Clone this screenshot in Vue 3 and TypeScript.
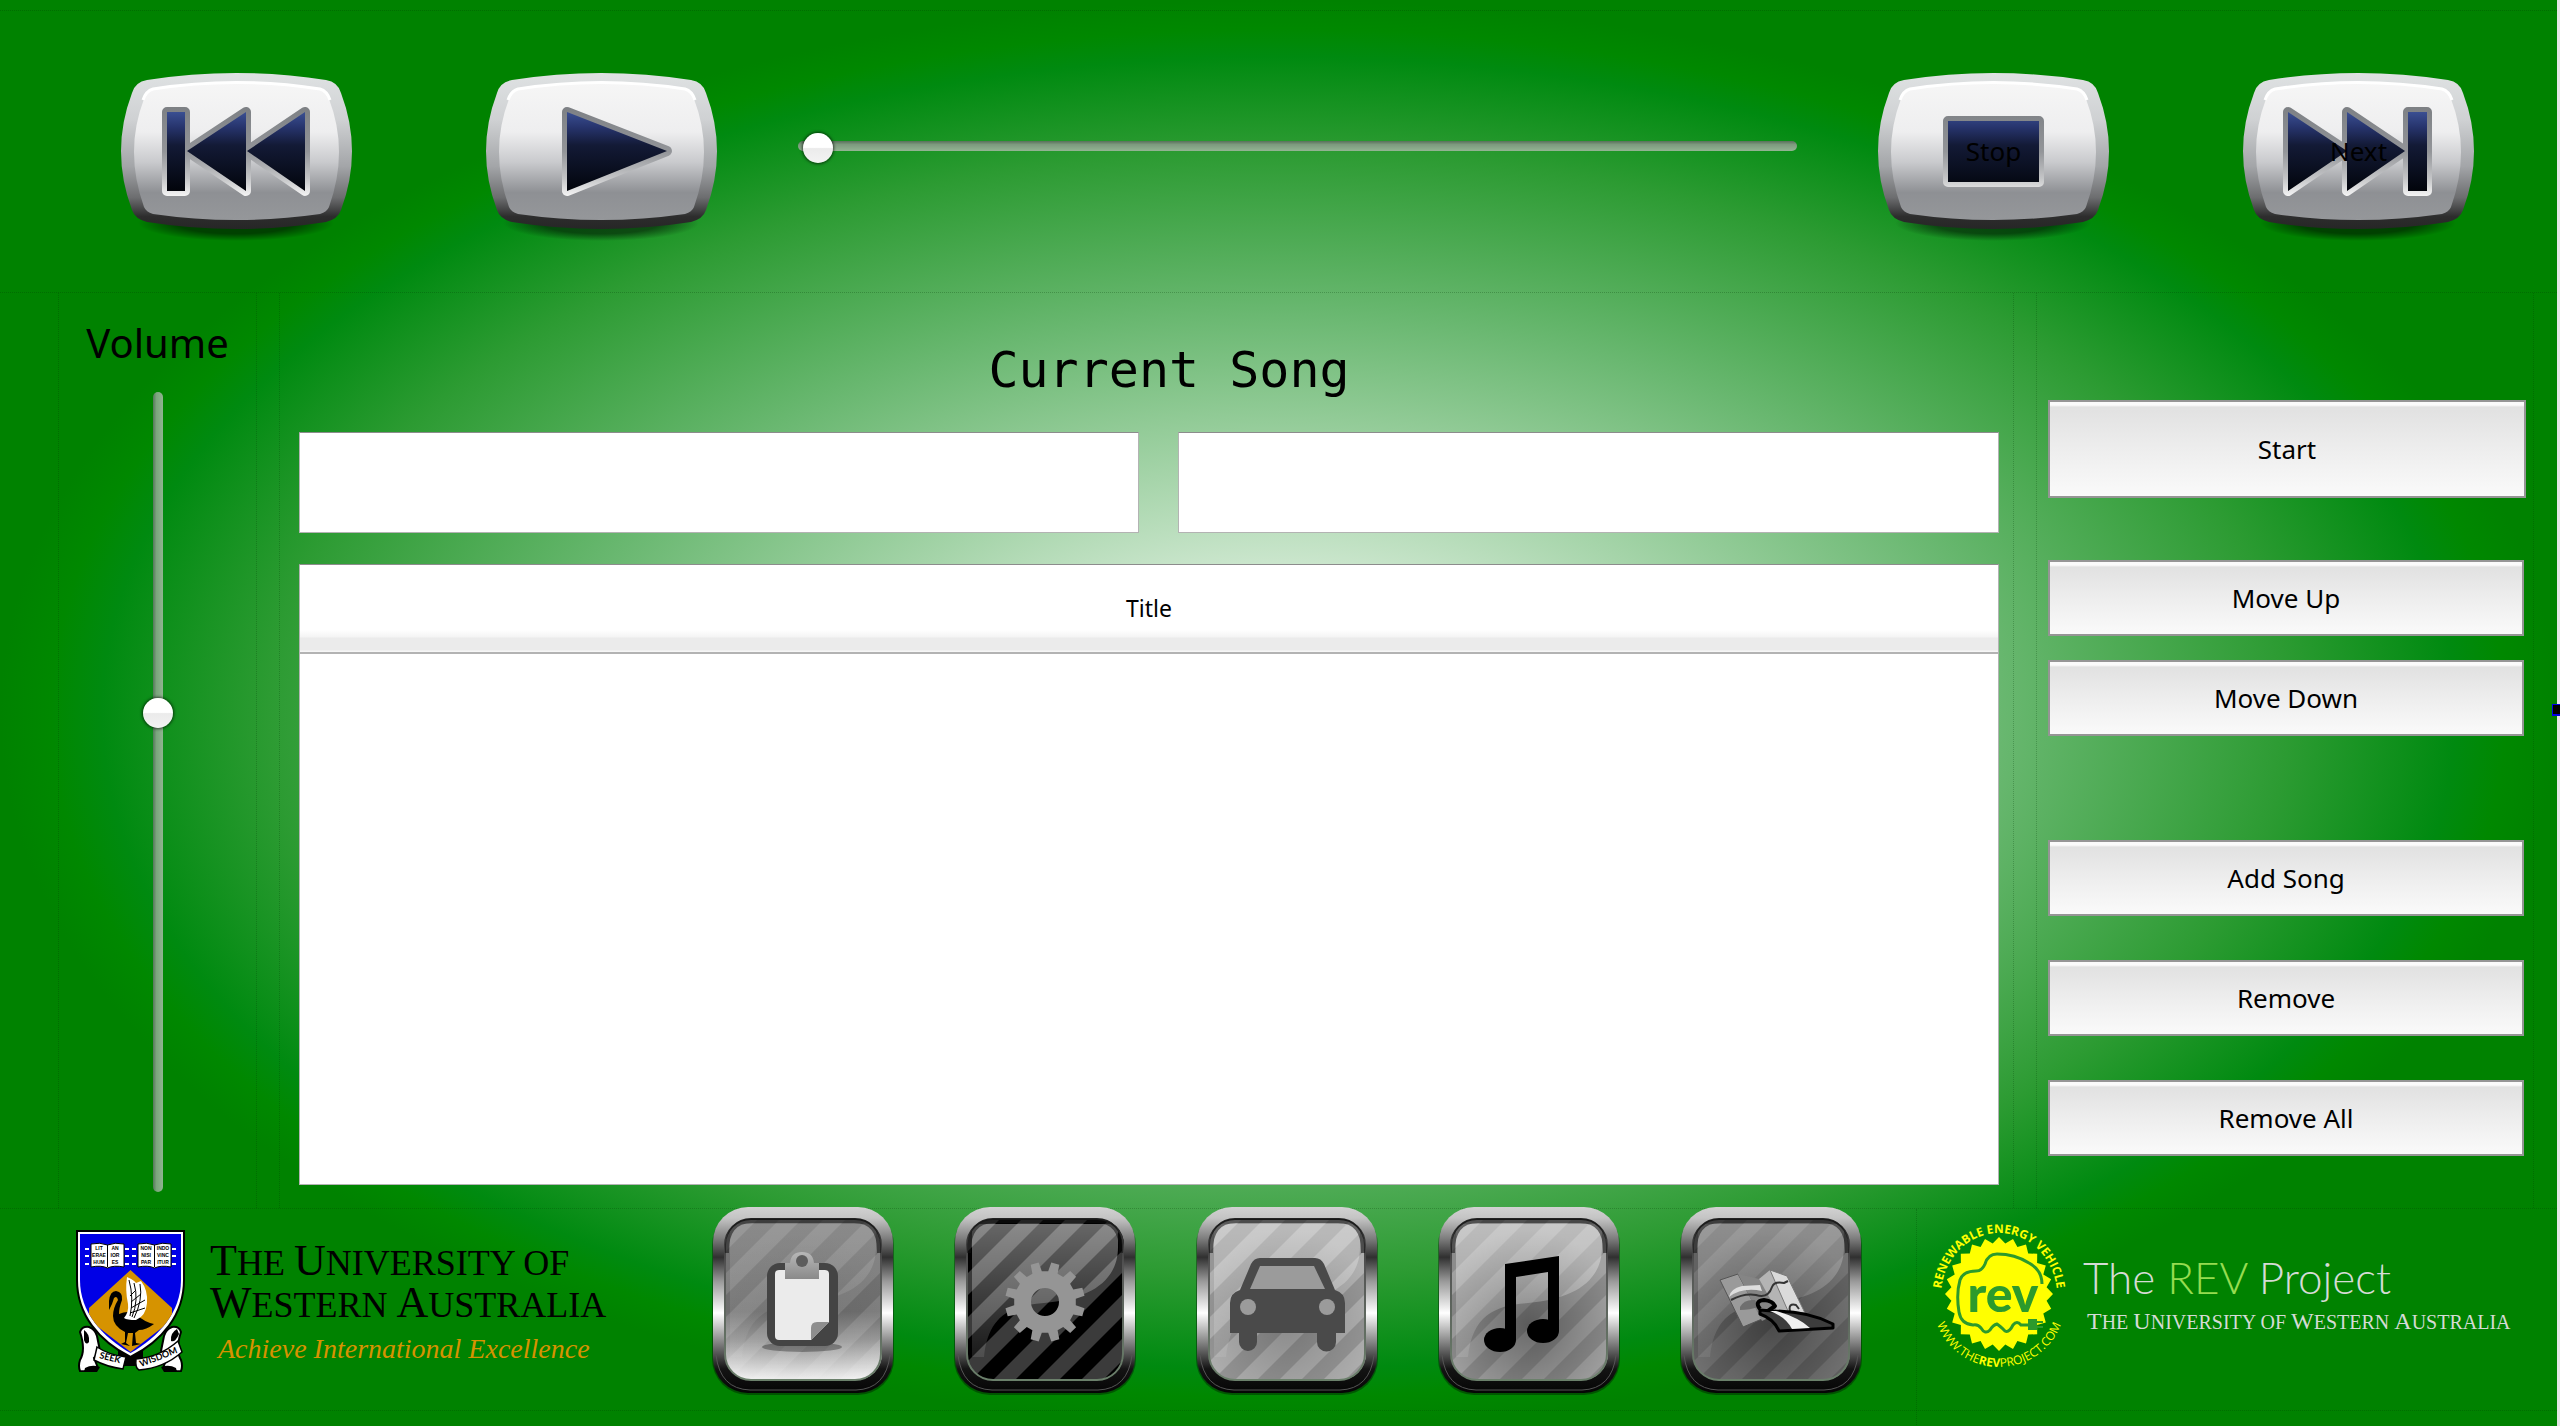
<script setup lang="ts">
import { ref } from 'vue'

interface Tile {
  id: string
  label: string
  base: string
  stripe: string
  shade: string
  gloss: number
}

const position = ref(5)
const volume = ref(603)
const artist = ref('')
const track = ref('')

const tiles: Tile[] = [
  { id: 'clip', label: 'Status', base: 'url(#tile-clip)', stripe: 'rgba(255,255,255,.12)', shade: '0.1', gloss: 0.16 },
  { id: 'gear', label: 'Settings', base: '#000', stripe: '#3b3b3b', shade: '0', gloss: 0.4 },
  { id: 'car', label: 'Vehicle', base: '#969696', stripe: '#b0b0b0', shade: '0.3', gloss: 0.34 },
  { id: 'note', label: 'Music', base: '#8c8c8c', stripe: '#a2a2a2', shade: '0.5', gloss: 0.42 },
  { id: 'map', label: 'Maps', base: '#626262', stripe: '#737373', shade: '0.5', gloss: 0.28 },
]

// Closed polygon alternating between two ellipses
function burst(cx: number, cy: number, n: number, rx: number, ry: number, dx: number, dy: number): string {
  const pts: string[] = []
  for (let i = 0; i < n * 2; i++) {
    const a = (Math.PI * i) / n
    const out = i % 2 === 0
    const x = cx + (out ? rx : dx) * Math.cos(a)
    const y = cy + (out ? ry : dy) * Math.sin(a)
    pts.push(`${x.toFixed(1)},${y.toFixed(1)}`)
  }
  return pts.join(' ')
}

function cog(cx: number, cy: number, n: number, outer: number, inner: number): string {
  const pts: string[] = []
  const step = (Math.PI * 2) / n
  for (let i = 0; i < n; i++) {
    const a = (i + 0.5) * step
    const corners: [number, number][] = [
      [-0.3, inner],
      [-0.2, outer],
      [0.2, outer],
      [0.3, inner],
    ]
    for (const [o, r] of corners) {
      pts.push(`${(cx + r * Math.cos(a + o * step)).toFixed(1)},${(cy + r * Math.sin(a + o * step)).toFixed(1)}`)
    }
  }
  return pts.join(' ')
}

const seal = burst(68, 72, 24, 54, 57, 48, 51)
const gear = cog(91, 95, 12, 40, 31)

const outerShape =
  'M26 7Q115 -7 205 7Q217 9 220 20Q242 78 220 137Q217 146 205 149Q115 163 26 149Q14 146 11 137Q-11 78 11 20Q14 9 26 7Z'
const innerShape =
  'M32 16Q115 3 199 16Q206 18 208 26Q228 78 208 134Q206 139 199 141Q115 153 32 141Q25 139 23 134Q3 78 23 26Q25 18 32 16Z'

const before = [
  { id: 'prev', label: 'Previous', text: '', d: 'M46 39H64V118H46ZM66 78L125 39V118ZM126 78L184 39V118Z' },
  { id: 'play', label: 'Play', text: '', d: 'M81 39L181 78L81 118Z' },
]
const after = [
  { id: 'stop', label: 'Stop', text: 'Stop', d: 'M70 48H161V109H70Z' },
  { id: 'next', label: 'Next', text: 'Next', d: 'M45 39L104 78L45 118ZM104 39L162 78L104 118ZM165 39H184V118H165Z' },
]
</script>

<template>
  <div class="app">
    <svg class="defs" width="0" height="0" aria-hidden="true">
      <defs>
        <linearGradient id="rim" x1="0" y1="0" x2="0" y2="1">
          <stop offset="0" stop-color="#dfe2e3" />
          <stop offset=".3" stop-color="#cfd1d3" />
          <stop offset=".6" stop-color="#a3a5a8" />
          <stop offset=".8" stop-color="#6c6d6f" />
          <stop offset=".92" stop-color="#2d2d2d" />
          <stop offset="1" stop-color="#262626" />
        </linearGradient>
        <linearGradient id="face" x1="0" y1="0" x2="0" y2="1">
          <stop offset="0" stop-color="#f6f6f6" />
          <stop offset=".36" stop-color="#eeeeef" />
          <stop offset=".58" stop-color="#c9cacd" />
          <stop offset=".8" stop-color="#8e9094" />
          <stop offset="1" stop-color="#95979a" />
        </linearGradient>
        <linearGradient id="groove" gradientUnits="userSpaceOnUse" x1="0" y1="34" x2="0" y2="123">
          <stop offset="0" stop-color="#7d8084" />
          <stop offset=".5" stop-color="#939599" />
          <stop offset=".8" stop-color="#c4c5c7" />
          <stop offset="1" stop-color="#f4f4f4" />
        </linearGradient>
        <linearGradient id="navy" gradientUnits="userSpaceOnUse" x1="0" y1="39" x2="0" y2="118">
          <stop offset="0" stop-color="#3a4f92" />
          <stop offset=".2" stop-color="#26336b" />
          <stop offset=".42" stop-color="#131a36" />
          <stop offset=".7" stop-color="#0b1022" />
          <stop offset="1" stop-color="#02040b" />
        </linearGradient>
        <radialGradient id="drop">
          <stop offset=".6" stop-color="#000" stop-opacity=".5" />
          <stop offset="1" stop-color="#000" stop-opacity="0" />
        </radialGradient>
        <linearGradient id="frame" x1="0" y1="0" x2="0" y2="1">
          <stop offset="0" stop-color="#d2d2d2" />
          <stop offset=".06" stop-color="#c4c4c4" />
          <stop offset=".17" stop-color="#7d7d7d" />
          <stop offset=".27" stop-color="#303030" />
          <stop offset=".4" stop-color="#9a9a9a" />
          <stop offset=".57" stop-color="#fff" />
          <stop offset=".72" stop-color="#8a8a8a" />
          <stop offset=".87" stop-color="#141414" />
          <stop offset="1" stop-color="#050505" />
        </linearGradient>
        <linearGradient id="tile-clip" x1="0" y1="0" x2="0" y2="1">
          <stop offset="0" stop-color="#757575" />
          <stop offset=".55" stop-color="#6e6e6e" />
          <stop offset=".7" stop-color="#9a9a9a" />
          <stop offset=".9" stop-color="#f0f0f0" />
        </linearGradient>
        <linearGradient id="lip" x1="0" y1="0" x2="0" y2="1">
          <stop offset="0" stop-color="#222" />
          <stop offset=".3" stop-color="#555" />
          <stop offset="1" stop-color="#6b806b" />
        </linearGradient>
        <linearGradient id="gloss" x1="0" y1="0" x2="0" y2="1">
          <stop offset="0" stop-color="#fff" />
          <stop offset="1" stop-color="#fff" stop-opacity=".25" />
        </linearGradient>
        <radialGradient id="shade" cx=".5" cy=".62" r=".5">
          <stop offset="0" stop-color="#000" stop-opacity=".7" />
          <stop offset="1" stop-color="#000" stop-opacity="0" />
        </radialGradient>
        <linearGradient id="metal" x1="0" y1="0" x2="0" y2="1">
          <stop offset="0" stop-color="#b8b8b8" />
          <stop offset="1" stop-color="#8a8a8a" />
        </linearGradient>
        <clipPath id="glass"><rect x="13" y="12" width="157" height="161" rx="26" /></clipPath>
        <clipPath id="shield"><path d="M4 4H105V50C105 82 83 107 54.500 123C26 107 4 82 4 50Z" /></clipPath>
      </defs>
    </svg>

    <header class="transport">
      <div class="pair">
        <button v-for="b in before" :key="b.id" class="media" type="button" :aria-label="b.label">
          <svg viewBox="0 0 231 170" aria-hidden="true">
            <ellipse cx="115" cy="150" rx="98" ry="18" fill="url(#drop)" />
            <path :d="outerShape" fill="url(#rim)" />
            <path :d="innerShape" fill="url(#face)" />
            <path d="M22 27Q25 18 32 16Q115 3 199 16Q206 18 209 27" fill="none" stroke="#fff" stroke-width="3" />
            <path :d="b.d" fill="none" stroke="url(#groove)" stroke-width="10" stroke-linejoin="round" />
            <path :d="b.d" fill="url(#navy)" />
          </svg>
        </button>
      </div>
      <input v-model.number="position" class="seek" type="range" min="0" max="1000" aria-label="Song position" />
      <div class="pair">
        <button v-for="b in after" :key="b.id" class="media" type="button" :aria-label="b.label">
          <svg viewBox="0 0 231 170" aria-hidden="true">
            <ellipse cx="115" cy="150" rx="98" ry="18" fill="url(#drop)" />
            <path :d="outerShape" fill="url(#rim)" />
            <path :d="innerShape" fill="url(#face)" />
            <path d="M22 27Q25 18 32 16Q115 3 199 16Q206 18 209 27" fill="none" stroke="#fff" stroke-width="3" />
            <path :d="b.d" fill="none" stroke="url(#groove)" stroke-width="10" stroke-linejoin="round" />
            <path :d="b.d" fill="url(#navy)" />
          </svg>
          <span class="caption">{{ b.text }}</span>
        </button>
      </div>
    </header>

    <main class="body">
      <section class="col volume">
        <label for="volume">Volume</label>
        <input id="volume" v-model.number="volume" type="range" min="0" max="1000" />
      </section>

      <section class="col player">
        <h1>Current Song</h1>
        <div class="fields">
          <input v-model="track" class="track" type="text" aria-label="Song title" />
          <input v-model="artist" class="artist" type="text" aria-label="Song artist" />
        </div>
        <div class="list">
          <table>
            <thead>
              <tr><th scope="col">Title</th></tr>
            </thead>
            <tbody></tbody>
          </table>
        </div>
      </section>

      <section class="col actions">
        <button class="start" type="button">Start</button>
        <div class="group near">
          <button type="button">Move Up</button>
          <button type="button">Move Down</button>
        </div>
        <div class="group">
          <button type="button">Add Song</button>
          <button type="button">Remove</button>
          <button type="button">Remove All</button>
        </div>
      </section>
    </main>

    <footer class="foot">
      <div class="uwa">
        <svg class="crest" viewBox="0 0 109 142" aria-hidden="true">
          <path d="M42 116L54 126L67 116V136H42Z" fill="#000" />
          <path d="M4 102Q6 96 13 97Q19 99 21 106L24 121L18 128L22 138Q14 142 4 141Q2 136 4 130Q10 120 4 102Z" fill="#fff" stroke="#000" stroke-width="2" />
          <path d="M8 100Q14 104 13 112Q10 116 8 110Z" fill="#000" />
          <path d="M9 138Q16 134 24 137L21 142H8Z" fill="#000" />
          <path d="M105 102Q103 96 96 97Q90 99 88 106L85 121L91 128L87 138Q95 142 105 141Q107 136 105 130Q99 120 105 102Z" fill="#fff" stroke="#000" stroke-width="2" />
          <path d="M101 99Q94 103 95 111Q99 113 103 104Z" fill="#000" />
          <path d="M100 138Q93 134 85 137L88 142H101Z" fill="#000" />
          <path d="M1 1H108V50C108 85 86 111 54.500 127C23 111 1 85 1 50Z" fill="#fff" stroke="#000" stroke-width="2" />
          <g clip-path="url(#shield)">
            <rect width="109" height="130" fill="#0000e6" />
            <path d="M54.500 40L96 78V90L54.500 122L13 90V78Z" fill="#d69300" />
          </g>
          <path d="M9 19h4M9 26h4M9 34h4M49 19h4M49 26h4M49 34h4M56 19h4M56 26h4M56 34h4M96 19h4M96 26h4M96 34h4" stroke="#fff" stroke-width="2" />
          <g fill="#fff" stroke="#000" stroke-width="1">
            <path d="M15 14Q24 12 31.500 15Q39 12 48 14V37Q38 35 31.500 38Q25 35 15 37Z" />
            <path d="M62 14Q71 12 78.500 15Q86 12 95 14V37Q85 35 78.500 38Q72 35 62 37Z" />
            <path d="M31.500 15V37M78.500 15V37" />
          </g>
          <g class="book">
            <text x="23" y="20">LIT</text><text x="23" y="27">ERAE</text><text x="23" y="34">HUM</text>
            <text x="39" y="20">AN</text><text x="39" y="27">IOR</text><text x="39" y="34">ES</text>
            <text x="70" y="20">NON</text><text x="70" y="27">NISI</text><text x="70" y="34">PAR</text>
            <text x="87" y="20">INDO</text><text x="87" y="27">VINC</text><text x="87" y="34">ITUR</text>
          </g>
          <path d="M33 80L33 71Q34 61 40 61Q47 62 46 70Q43 78 43 84Q52 80 60 84Q68 92 78 94Q70 100 63 100L59 103L60 113L65 114L56 116L57 103H52L50 113L54 116L45 114L49 112L49 102Q37 96 37 86Q37 78 42 70Q41 65 38 68L36 74Z" fill="#000" />
          <path d="M51 47Q58 50 60 53L65 51Q72 60 71 73Q70 86 60 90Q51 90 48 88Q53 82 52 74Q49 60 51 47Z" fill="#fff" />
          <path d="M53 50Q58 68 54 86M58 53Q63 70 56 87M64 54Q67 70 58 88M54 66L60 60M55 72L65 64M55 78L69 70M54 83L69 78" fill="none" stroke="#000" stroke-width="1" />
          <path d="M21 117Q33 125 50 127L47 139Q31 137 18 130Z" fill="#fff" stroke="#000" stroke-width="1.500" />
          <path d="M60 129Q84 127 102 111L106 122Q88 138 63 140Q59 138 60 129Z" fill="#fff" stroke="#000" stroke-width="1.500" />
          <text class="motto" transform="translate(23 128) rotate(14)">SEEK</text>
          <text class="motto" transform="translate(65 137) rotate(-21)">WISDOM</text>
        </svg>
        <div class="uwa-text">
          <p class="uwa-name"><b>T</b>HE <b>U</b>NIVERSITY OF</p>
          <p class="uwa-name"><b>W</b>ESTERN <b>A</b>USTRALIA</p>
          <p class="tagline">Achieve International Excellence</p>
        </div>
      </div>

      <nav class="tiles" aria-label="Sections">
        <button v-for="t in tiles" :key="t.id" type="button" :aria-label="t.label">
          <svg viewBox="0 0 182 190" aria-hidden="true">
            <rect x="0" y="2" width="182" height="186" rx="36" fill="#000" opacity=".35" />
            <rect x="1" y="0" width="180" height="186" rx="35" fill="url(#frame)" />
            <path d="M4 148Q8 182 38 183H144Q174 182 178 148" fill="none" stroke="#555" stroke-width="1" />
            <g clip-path="url(#glass)">
              <rect width="182" height="190" :fill="t.base" />
              <g :fill="t.stripe">
                <path v-for="i in 9" :key="i" :d="`M${i * 44 - 198} 190L${i * 44 - 8} 0H${i * 44 + 14}L${i * 44 - 176} 190Z`" />
              </g>
              <rect width="182" height="190" fill="url(#shade)" :opacity="t.shade" />
              <path d="M18 17H164V40C164 74 136 92 90 96C58 98 34 108 30 150H18Z" fill="url(#gloss)" :opacity="t.gloss" />
            </g>
            <rect x="13" y="12" width="156" height="161" rx="26" fill="none" stroke="url(#lip)" stroke-width="2" />
            <path d="M15 46Q14 14 40 14H142Q168 14 167 46" fill="none" stroke="#111" stroke-width="4" opacity=".55" />

            <g v-if="t.id === 'clip'">
              <ellipse cx="90" cy="140" rx="40" ry="5" fill="#000" opacity=".3" />
              <rect x="55" y="56" width="71" height="83" rx="13" fill="#444" />
              <path d="M67 63H113Q117 63 117 67V115L99 133H67Q63 133 63 129V67Q63 63 67 63Z" fill="#ebebeb" />
              <path d="M99 133V121Q99 115 105 115H117Z" fill="#8e8e8e" />
              <path d="M73 72V56H78Q79 45 90 45Q101 45 102 56H107V72Z" fill="url(#metal)" />
              <circle cx="90" cy="54" r="6" fill="#5d5d5d" />
            </g>
            <g v-else-if="t.id === 'gear'">
              <path fill-rule="evenodd" fill="#959595" :d="`M${gear.split(' ').join('L')}ZM77 95a14 14 0 1 0 28 0a14 14 0 1 0 -28 0Z`" />
            </g>
            <g v-else-if="t.id === 'car'" fill="#4a4a4a">
              <path d="M34 126V96Q34 86 44 83L55 57Q58 51 64 51H119Q125 51 128 57L139 83Q149 86 149 96V126H140V135A9 9 0 0 1 121 135V126H61V135A9 9 0 0 1 43 135V126Z" />
              <path d="M64 59H118L129 82H54Z" fill="#9b9b9b" />
              <circle cx="52" cy="100" r="8" fill="#9b9b9b" />
              <circle cx="131" cy="100" r="8" fill="#9b9b9b" />
            </g>
            <g v-else-if="t.id === 'note'" fill="#000">
              <path d="M67 57L121 49V124H110V65L78 70V133H67Z" />
              <ellipse cx="62" cy="133" rx="16" ry="12" />
              <ellipse cx="105" cy="124" rx="16" ry="12" />
            </g>
            <g v-else stroke-linejoin="round">
              <path d="M40 73L58 67L82 112L63 120Z" fill="#9a9a9a" stroke="#555" />
              <path d="M58 67L79 72L98 106L82 114Z" fill="#858585" />
              <path d="M79 72L90 63L112 106L98 106Z" fill="#b4b4b4" />
              <path d="M90 63L107 69L125 106L108 104Z" fill="#dadada" stroke="#777" />
              <path d="M49 90Q62 80 82 84L80 78L62 79Q50 82 49 90Z" fill="#ddd" />
              <path d="M51 93Q64 86 76 88Q88 92 92 80Q94 74 104 76L108 74M110 104Q108 96 116 98L119 102" fill="none" stroke="#333" stroke-width="2" />
              <path d="M60 100Q64 92 75 93L78 100Q70 103 60 103Z" fill="#6f6f6f" />
              <path d="M80 102Q74 94 84 93Q93 94 95 99L88 104" fill="none" stroke="#000" stroke-width="4" />
              <path d="M80 103L92 104Q128 104 153 117V121L99 124Q94 112 80 107Z" fill="#3d3d3d" stroke="#000" stroke-width="3" />
              <path d="M90 104H96Q118 110 130 121L112 122Q106 110 90 104Z" fill="#f0f0f0" />
            </g>
          </svg>
        </button>
      </nav>

      <div class="rev">
        <svg class="seal" viewBox="0 0 137 146" aria-hidden="true">
          <defs>
            <path id="arc-top" d="M10 74A58 63 0 0 1 126 74" />
            <path id="arc-low" d="M2 80A66 65 0 0 0 134 80" />
          </defs>
          <polygon :points="seal" fill="#ffff00" />
          <text class="ring heavy"><textPath href="#arc-top" startOffset="50%">RENEWABLE ENERGY VEHICLE</textPath></text>
          <text class="ring"><textPath href="#arc-low" startOffset="50%">WWW.THE<tspan class="heavy">REV</tspan>PROJECT.COM</textPath></text>
          <path d="M97 103H90Q86 98 82 103Q78 111 74 109Q69 104 66 102Q62 103 59 108Q54 113 50 106Q47 102 42 103Q30 102 28 90Q25 72 29 58Q32 49 45 49Q51 49 54 42Q57 32 66 32Q84 32 98 41Q111 48 111 62" fill="none" stroke="#2c9a2c" stroke-width="3" />
          <path d="M97 97H106V99H112V101H106V104H112V106H106V108H97Z" fill="#2c9a2c" />
          <text class="word" x="72" y="90">rev</text>
        </svg>
        <div class="rev-text">
          <p class="rev-name">The <span>REV</span> Project</p>
          <p class="rev-uni"><b>T</b>HE <b>U</b>NIVERSITY OF <b>W</b>ESTERN <b>A</b>USTRALIA</p>
        </div>
      </div>
    </footer>
    <span class="handle" aria-hidden="true"></span>
  </div>
</template>

<style>
body {
  margin: 0;
}
</style>

<style scoped>
* {
  box-sizing: border-box;
}
p,
h1 {
  margin: 0;
}
.app {
  --guide: 1px dotted rgba(0, 50, 0, 0.25);
  position: relative;
  display: flex;
  flex-direction: column;
  min-height: 100vh;
  padding: 10px 0 15px;
  border-right: 3px solid #e6e6e6;
  font-family: 'Noto Sans', 'Open Sans', sans-serif;
  color: #000;
  background: radial-gradient(
    50% 50% at 50% 50%,
    #fff 0%,
    #cde7cf 20%,
    #6ab871 56%,
    #2c9b32 79%,
    #008a10 92%,
    #008800 96%,
    #008200 100%
  );
}
.defs {
  position: absolute;
}
button {
  font: inherit;
  color: inherit;
  padding: 0;
  cursor: pointer;
}
.transport {
  display: flex;
  align-items: flex-start;
  height: 283px;
  padding: 62px 83px 0 121px;
  border-top: var(--guide);
  border-bottom: var(--guide);
}
.pair {
  display: flex;
  gap: 134px;
}
.media {
  position: relative;
  width: 231px;
  border: 0;
  background: none;
}
.media svg {
  display: block;
  width: 100%;
}
.caption {
  position: absolute;
  inset: 0;
  font-size: 26px;
  line-height: 156px;
}
input[type='range'] {
  appearance: none;
  margin: 0;
  background: none;
}
.transport .seek {
  flex: 1;
  min-width: 0;
  height: 30px;
  margin: 58px 81px 0;
}
.seek::-webkit-slider-runnable-track {
  height: 10px;
  border-radius: 5px;
  background: linear-gradient(#58705a, #7d9a7e 35%, #93b493);
}
.seek::-webkit-slider-thumb {
  appearance: none;
  width: 30px;
  height: 30px;
  margin-top: -8px;
  border-radius: 50%;
  background: linear-gradient(#fff 48%, #ebebeb 52%, #f3f3f3);
  box-shadow: 0 0 3px 1px rgba(0, 0, 0, 0.6);
}
.body {
  flex: 1;
  display: flex;
  gap: 22px;
  padding: 0 23px 0 58px;
}
.col {
  display: flex;
  flex-direction: column;
  border-left: var(--guide);
  border-right: var(--guide);
}
.volume {
  width: 199px;
  align-items: center;
  padding: 26px 0 16px;
}
.volume label {
  font-size: 40px;
  line-height: 48px;
}
.volume input {
  flex: 1;
  width: 30px;
  margin-top: 25px;
  writing-mode: vertical-lr;
  direction: rtl;
}
.volume input::-webkit-slider-runnable-track {
  width: 10px;
  border-radius: 5px;
  background: linear-gradient(90deg, #55775a, #7ba57d 35%, #8fb490);
}
.volume input::-webkit-slider-thumb {
  appearance: none;
  width: 30px;
  height: 30px;
  margin-left: -10px;
  border-radius: 50%;
  background: linear-gradient(#fff 48%, #ebebeb 52%, #f3f3f3);
  box-shadow: 0 0 3px 1px rgba(0, 0, 0, 0.6);
}
.player {
  flex: 1;
  padding: 47px 14px 23px 19px;
}
h1 {
  padding-left: 40px;
  font: 400 50px/60px 'DejaVu Sans Mono', monospace;
  text-align: center;
}
.fields {
  display: flex;
  gap: 39px;
  margin: 32px 0 31px;
}
.fields input {
  min-width: 0;
  height: 101px;
  padding: 0 16px;
  font: 26px 'Noto Sans', sans-serif;
  background: #fff;
  border: 1px solid #b3b3b3;
  border-top-color: #8c8c8c;
}
.track {
  flex: 841 1 0;
}
.artist {
  flex: 821 1 0;
}
.list {
  flex: 1;
  background: #fff;
  border: 1px solid #b3b3b3;
  border-top-color: #8c8c8c;
}
table {
  width: 100%;
  border-collapse: collapse;
}
th {
  height: 88px;
  padding: 0 0 2px;
  font-size: 23px;
  font-weight: 400;
  background: linear-gradient(#fff 65px, #f4f4f4 72px, #ebebeb 73px, #ebebeb 85px, #f6f6f6 86px);
  border-bottom: 2px solid #b3b3b3;
}
.actions {
  width: 498px;
  padding: 107px 7px 0 11px;
  font-size: 26px;
}
.actions button {
  height: 76px;
  border: 2px solid #959595;
  background: linear-gradient(#fafafa 3px, #efefef 4px, #e1e1e1 5px, #ececec 45%, #fafafa);
}
.actions .start {
  height: 98px;
}
.group {
  display: flex;
  flex-direction: column;
  gap: 44px;
  margin: 104px 2px 0 0;
}
.group.near {
  gap: 24px;
  margin-top: 62px;
}
.foot {
  display: flex;
  align-items: flex-start;
  height: 203px;
  padding-left: 76px;
  border-top: var(--guide);
  border-bottom: var(--guide);
}
.uwa {
  display: flex;
  width: 636px;
  padding-top: 21px;
  gap: 25px;
}
.crest {
  width: 109px;
  height: 142px;
  flex: none;
}
.book text {
  font: 700 5px 'Liberation Sans', sans-serif;
  text-anchor: middle;
}
.motto {
  font: 700 9px Lato, sans-serif;
}
.uwa-text {
  padding-top: 11px;
  font-family: 'Liberation Serif', serif;
  white-space: nowrap;
}
.uwa-name {
  font-size: 36px;
  line-height: 40px;
}
.uwa-name b {
  font-size: 44px;
  font-weight: 400;
}
.tagline {
  padding: 8px 0 0 8px;
  font-size: 28px;
  font-style: italic;
  line-height: 32px;
  color: #d69300;
}
.tiles {
  display: flex;
  gap: 60px;
  margin-top: -2px;
}
.tiles button {
  width: 182px;
  border: 0;
  background: none;
}
.tiles svg {
  display: block;
  width: 100%;
}
.rev {
  flex: 1;
  display: flex;
  gap: 15px;
  height: 216px;
  margin-left: 54px;
  padding: 13px 0 0 14px;
  border-left: var(--guide);
}
.seal {
  width: 137px;
  height: 146px;
  flex: none;
  overflow: visible;
}
.ring {
  font: 400 12px 'Open Sans', sans-serif;
  fill: #ffff00;
  text-anchor: middle;
}
.heavy {
  font-weight: 700;
}
.word {
  font: 900 50px Lato, sans-serif;
  fill: #2c9a2c;
  text-anchor: middle;
}
.rev-text {
  padding-top: 27px;
  white-space: nowrap;
}
.rev-name {
  font: 300 44px/56px Lato, sans-serif;
  color: #d5dbd5;
}
.rev-name span {
  color: #96dc50;
}
.rev-uni {
  padding-left: 4px;
  font: 20px/32px 'Liberation Serif', serif;
  color: #d5dbd5;
}
.rev-uni b {
  font-size: 24px;
  font-weight: 400;
}
.handle {
  position: absolute;
  top: 704px;
  right: -3px;
  width: 8px;
  height: 12px;
  background: #000;
  border: solid #0000e6;
  border-width: 1px 0 2px 1px;
}
</style>
